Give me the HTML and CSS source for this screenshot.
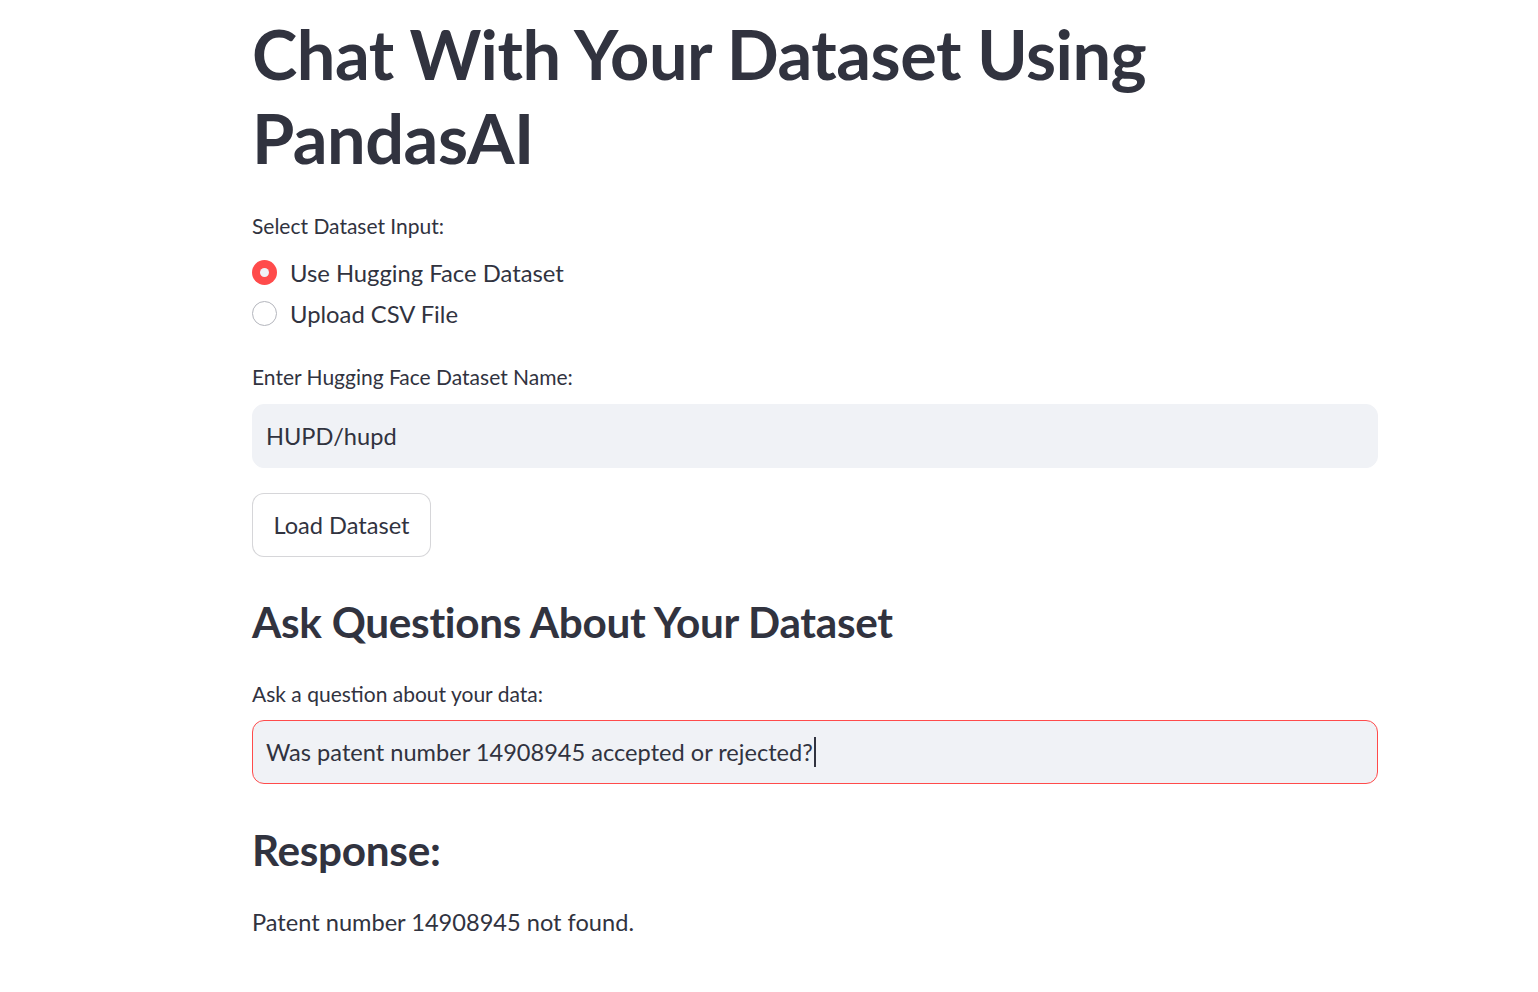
FILE: index.html
```html
<!DOCTYPE html>
<html lang="en">
<head>
<meta charset="utf-8">
<title>Chat With Your Dataset Using PandasAI</title>
<link rel="stylesheet" href="styles.css">
</head>
<body>
<main class="main">
  <h1 class="title">Chat With Your Dataset Using PandasAI</h1>

  <div class="label label-first">Select Dataset Input:</div>
  <div class="radio-group">
    <div class="radio-row">
      <span class="radio radio-on"><span class="radio-dot"></span></span>
      <span class="radio-text">Use Hugging Face Dataset</span>
    </div>
    <div class="radio-row">
      <span class="radio radio-off"></span>
      <span class="radio-text">Upload CSV File</span>
    </div>
  </div>

  <div class="label label-second">Enter Hugging Face Dataset Name:</div>
  <div class="input input-first">HUPD/hupd</div>

  <div class="btn-row"><button class="btn">Load Dataset</button></div>

  <h3 class="subhead subhead-ask">Ask Questions About Your Dataset</h3>
  <div class="label label-third">Ask a question about your data:</div>
  <div class="input input-focus">Was patent number 14908945 accepted or rejected?<span class="caret"></span></div>

  <h3 class="subhead subhead-resp">Response:</h3>
  <p class="body-text">Patent number 14908945 not found.</p>
</main>
</body>
</html>
```

FILE: styles.css
```css
html, body {
  margin: 0;
  padding: 0;
  background: #ffffff;
}
body {
  font-family: "Lato", "Liberation Sans", sans-serif;
  color: #31333f;
}
.main {
  width: 1126px;
  margin-left: 252px;
  display: flex;
  flex-direction: column;
  padding-top: 12px;
}
.title {
  margin: 0;
  font-size: 68.5px;
  line-height: 84px;
  font-weight: 700;
  letter-spacing: -0.5px;
}
.label {
  font-size: 21px;
  line-height: 26px;
  height: 26px;
}
.label-first { margin-top: 33px; }
.label-second { margin-top: 30px; }
.label-third { margin-top: 33px; }
.radio-group {
  margin-top: 13px;
  display: flex;
  flex-direction: column;
}
.radio-row {
  height: 41px;
  display: flex;
  align-items: center;
  gap: 13px;
}
.radio {
  width: 25px;
  height: 25px;
  border-radius: 50%;
  box-sizing: border-box;
  display: flex;
  align-items: center;
  justify-content: center;
  flex: none;
}
.radio-on { background: #ff4b4b; }
.radio-dot {
  width: 9px;
  height: 9px;
  border-radius: 50%;
  background: #f0f2f6;
}
.radio-off {
  border: 1.5px solid #b4b6bd;
  background: #ffffff;
}
.radio-text {
  font-size: 23.8px;
  line-height: 30px;
}
.input {
  margin-top: 13px;
  height: 64px;
  box-sizing: border-box;
  background: #f0f2f6;
  border: 1px solid #f0f2f6;
  border-radius: 12px;
  padding: 0 13px;
  display: flex;
  align-items: center;
  font-size: 23.6px;
}
.input-first {
  margin-top: 14px;
}
.input-focus {
  border-color: #ff4b4b;
}
.caret {
  display: inline-block;
  width: 2px;
  height: 30px;
  background: #31333f;
  margin-left: 1px;
}
.btn-row {
  margin-top: 25px;
  display: flex;
}
.btn {
  height: 64px;
  width: 179px;
  box-sizing: border-box;
  background: #ffffff;
  border: 1px solid rgba(49, 51, 63, 0.2);
  border-radius: 12px;
  font-family: inherit;
  font-size: 23.6px;
  color: #31333f;
  padding: 0;
  white-space: nowrap;
}
.subhead {
  margin: 0;
  font-size: 42.3px;
  line-height: 52px;
  font-weight: 700;
  letter-spacing: -0.3px;
}
.subhead-ask { margin-top: 39px; }
.subhead-resp { margin-top: 40px; }
.body-text {
  margin: 29px 0 0 0;
  font-size: 23.6px;
  line-height: 34px;
}
```
